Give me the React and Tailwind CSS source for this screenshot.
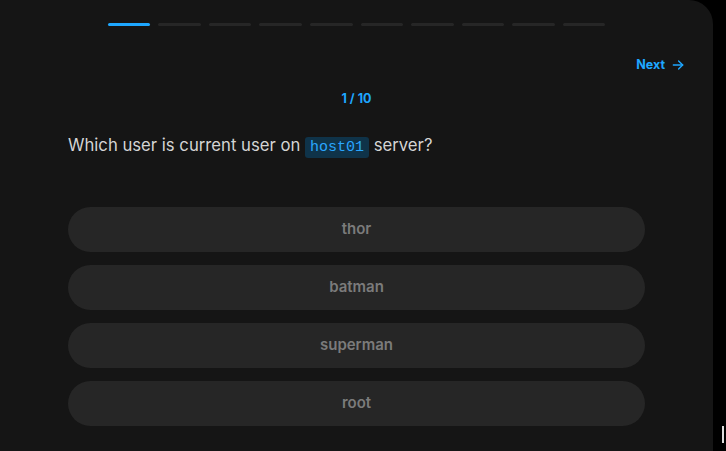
import React from "react";

const steps = [0, 1, 2, 3, 4, 5, 6, 7, 8, 9];
const options = ["thor", "batman", "superman", "root"];

const Quiz = () => {
  return (
    <div className="relative w-[713px] h-[451px] bg-[#151515] rounded-tr-[24px] overflow-hidden">
      {/* Progress */}
      <div className="flex justify-center gap-[8px] pt-[23px]">
        {steps.map((i) => (
          <div
            key={i}
            className={
              i === 0
                ? "w-[42.6px] h-[3px] rounded-full bg-[#1ea7ff]"
                : "w-[42.6px] h-[3px] rounded-full bg-[#262626]"
            }
          />
        ))}
      </div>

      {/* Next */}
      <div className="flex justify-end pr-[28px] mt-[30px]">
        <button className="flex items-center gap-[6px] text-[12.5px] font-bold text-[#1ea7ff]">
          Next
          <svg width="14" height="14" viewBox="0 0 24 24" fill="none" stroke="currentColor" strokeWidth="2.4" strokeLinecap="round" strokeLinejoin="round">
            <path d="M4 12h16" />
            <path d="m13 5 7 7-7 7" />
          </svg>
        </button>
      </div>

      <div className="text-center text-[12.5px] font-bold text-[#1ea7ff] mt-[15px]">1 / 10</div>

      {/* Question */}
      <p className="px-[68px] mt-[24px] text-[16.7px] text-[#d4d4d4] leading-[24px]">
        Which user is current user on{" "}
        <code className="font-['Liberation_Mono',monospace] text-[15px] text-[#2aa6ff] bg-[#0f3349] rounded-[3px] px-[5px] py-[2px]">host01</code>{" "}
        server?
      </p>

      {/* Options */}
      <div className="flex flex-col gap-[13px] px-[68px] mt-[47px]">
        {options.map((o) => (
          <button
            key={o}
            className="h-[45px] w-full rounded-full bg-[#262626] text-[15px] font-semibold text-[#7b7b7b] pt-[1px]"
          >
            {o}
          </button>
        ))}
      </div>
    </div>
  );
};

export default function App() {
  return (
    <div className="relative w-[726px] h-[451px] bg-black overflow-hidden font-['Inter',sans-serif]">
      <Quiz />
      {/* caret */}
      <div className="absolute left-[722px] top-[426px] w-[2px] h-[17px] bg-[#dcdcdc]" />
    </div>
  );
}
